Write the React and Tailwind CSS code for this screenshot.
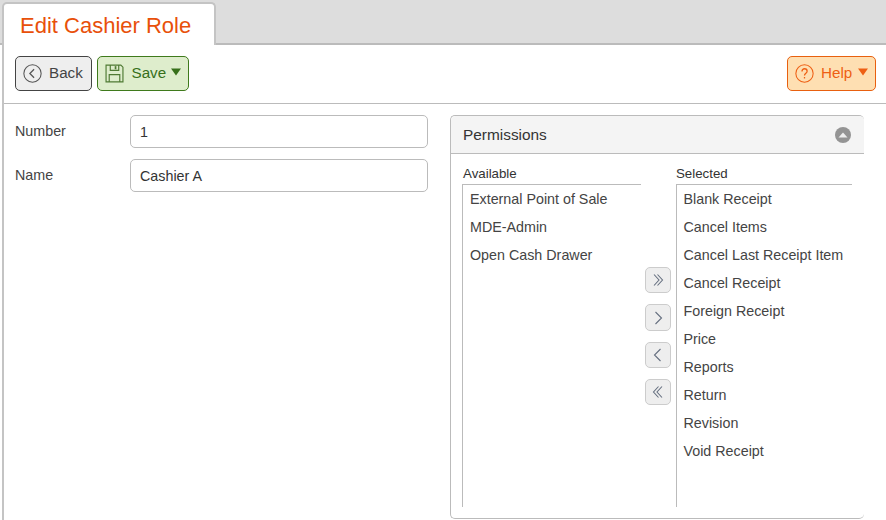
const available = ["External Point of Sale", "MDE-Admin", "Open Cash Drawer"];
const selected = [
  "Blank Receipt",
  "Cancel Items",
  "Cancel Last Receipt Item",
  "Cancel Receipt",
  "Foreign Receipt",
  "Price",
  "Reports",
  "Return",
  "Revision",
  "Void Receipt",
];

function Caret({ className }) {
  return (
    <svg width="10" height="8" viewBox="0 0 10 8" className={className}>
      <path d="M0 0.5h10L5 7.5z" fill="currentColor" />
    </svg>
  );
}

function PickList({ label, items, width, labelPad, itemPad }) {
  return (
    <div className={`flex flex-col ${width}`}>
      <div className={`h-[18px] text-[13.300px] leading-[16px] text-[#333] ${labelPad}`}>{label}</div>
      <div className="h-[323px] border-l border-t border-[#bbb]">
        {items.map((item) => (
          <div key={item} className={`h-[28px] text-[14.300px] leading-[28px] whitespace-nowrap text-[#444] ${itemPad}`}>
            {item}
          </div>
        ))}
      </div>
    </div>
  );
}

function MoveButton({ d, tall }) {
  return (
    <div className={`flex w-[26px] items-center justify-center rounded-[5px] border border-[#ccc] bg-[#eee] ${tall ? "h-[27px]" : "h-[26px]"}`}>
      <svg width="14" height="14" viewBox="0 0 14 14" fill="none" stroke="#667080" strokeWidth="1.1">
        <path d={d} />
      </svg>
    </div>
  );
}

function Field({ label, value }) {
  return (
    <div className="flex h-[33px] items-start">
      <div className="w-[115px] pt-[7px] text-[14.300px] leading-[18px] text-[#444]">{label}</div>
      <div className="flex h-[33px] w-[298px] items-center rounded-[5px] border border-[#bbb] bg-white pl-[9px] pt-[2px] text-[14.300px] text-[#333]">
        {value}
      </div>
    </div>
  );
}

export default function App() {
  return (
    <div
      className="flex h-[520px] w-[886px] flex-col overflow-hidden bg-white"
      style={{ fontFamily: '"Liberation Sans", Arial, sans-serif' }}
    >
      {/* Tab strip */}
      <div className="flex h-[45px] shrink-0 items-end border-b-2 border-[#bbb] bg-[#ddd] pl-[2px]">
        <div className="-mb-[2px] flex h-[43px] w-[214px] items-center rounded-t-[5px] border-x-2 border-b-0 border-t-2 border-[#c4c4c4] bg-white pl-[16px] pt-[1px] text-[22px] text-[#e8500a]">
          Edit Cashier Role
        </div>
      </div>

      <div className="ml-[2px] flex min-h-0 flex-1 flex-col border-l-2 border-[#c4c4c4]">
        {/* Toolbar */}
        <div className="flex h-[59px] shrink-0 items-start justify-between border-b border-[#bbb] pl-[11px] pr-[10px] pt-[11px]">
          <div className="flex gap-[5px]">
            <div className="flex h-[35px] w-[77px] items-center rounded-[5px] border border-[#444] bg-[#eee] pl-[7px] text-[15.200px] text-[#444]">
              <svg width="19" height="19" viewBox="0 0 18 18" fill="none" stroke="#555" strokeWidth="1">
                <circle cx="9" cy="9" r="8.2" />
                <path d="M10.5 5L6.5 9l4 4" strokeWidth="1.2" />
              </svg>
              <span className="ml-[7px]">Back</span>
            </div>
            <div className="flex h-[35px] w-[92px] items-center rounded-[5px] border border-[#3f7a1c] bg-[#deedcc] pl-[7px] text-[15.200px] text-[#37701a]">
              <svg width="19" height="19" viewBox="0 0 18 18" fill="none" stroke="#4f7a33" strokeWidth="1.1">
                <path d="M1 1h14l2 2v14H1z" />
                <path d="M5 1v5h8V1" />
                <path d="M10 2v3" strokeWidth="1.6" />
                <path d="M4 17v-7h10v7" />
              </svg>
              <span className="ml-[7.500px]">Save</span>
              <Caret className="-mt-[3px] ml-[5px] text-[#37701a]" />
            </div>
          </div>
          <div className="flex h-[35px] w-[89px] items-center rounded-[5px] border border-[#e8600f] bg-[#fedfb2] pl-[7px] text-[15.200px] text-[#ee5f14]">
            <svg width="19" height="19" viewBox="0 0 18 18" fill="none" stroke="#ee5f14" strokeWidth="1">
              <circle cx="9" cy="9" r="8.2" />
              <path d="M6.6 7c0-1.6 1-2.5 2.5-2.5S11.500 5.400 11.500 6.800c0 1.900-2.500 1.900-2.500 4" strokeWidth="1.2" />
              <path d="M9 12.300v1.400" strokeWidth="1.2" />
            </svg>
            <span className="ml-[7px]">Help</span>
            <Caret className="-mt-[3px] ml-[6px] text-[#ee5f14]" />
          </div>
        </div>

        {/* Form + permissions */}
        <div className="flex min-h-0 flex-1 pl-[11px] pt-[11px]">
          <div className="flex w-[435px] shrink-0 flex-col gap-[11px]">
            <Field label="Number" value="1" />
            <Field label="Name" value="Cashier A" />
          </div>
          <div className="h-[404px] w-[414px] rounded-[5px] border border-r-0 border-[#bbb]">
            <div className="flex h-[38px] items-center justify-between rounded-t-[5px] border-b border-[#bbb] bg-[#f4f4f4] pl-[12px] pr-[13px] text-[15.400px] text-[#333]">
              <span className="pt-[1px]">Permissions</span>
              <span className="flex h-[16px] w-[16px] items-center justify-center rounded-full bg-[#949494]">
                <svg width="10" height="6" viewBox="0 0 10 6">
                  <path d="M5 0.500L9.500 5.500H0.500z" fill="#eee" />
                </svg>
              </span>
            </div>
            <div className="flex pl-[11px] pt-[12px]">
              <PickList label="Available" items={available} width="w-[179px]" labelPad="pl-[1px]" itemPad="pl-[7px]" />
              <div className="flex w-[35px] shrink-0 flex-col gap-[11px] pl-[4px] pt-[101px]">
                <MoveButton d="M3 1.500L8 7 3 12.500M6.500 1.500L11.500 7 6.500 12.500" />
                <MoveButton tall d="M4.500 1L10.500 7 4.500 13" />
                <MoveButton d="M9.500 1L3.500 7 9.500 13" />
                <MoveButton d="M11 1.500L6 7 11 12.500M7.500 1.500L2.500 7 7.500 12.500" />
              </div>
              <PickList label="Selected" items={selected} width="w-[176px]" labelPad="pl-0" itemPad="pl-[6.500px]" />
            </div>
          </div>
        </div>
      </div>
    </div>
  );
}
